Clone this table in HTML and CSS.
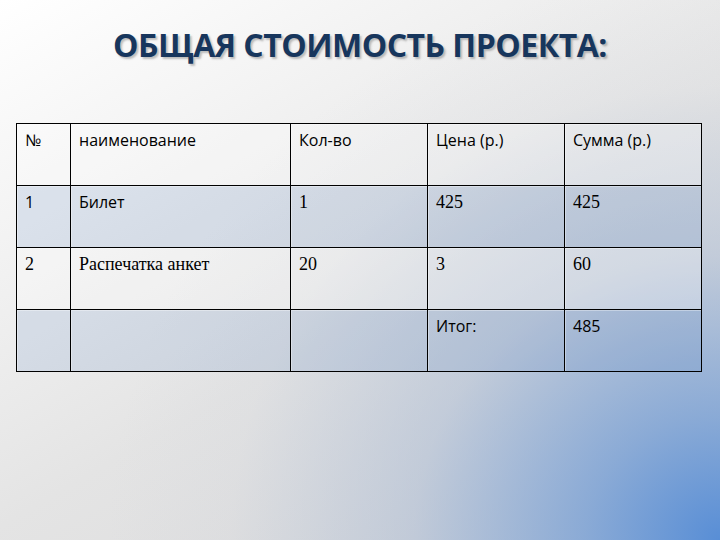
FILE: index.html
```html
<!DOCTYPE html>
<html lang="ru">
<head>
<meta charset="utf-8">
<title>Общая стоимость проекта</title>
<link rel="stylesheet" href="styles.css">
</head>
<body>
<div class="slide">
  <h1 class="title">ОБЩАЯ СТОИМОСТЬ ПРОЕКТА:</h1>
  <table class="cost">
    <colgroup>
      <col class="c-num">
      <col class="c-name">
      <col class="c-qty">
      <col class="c-price">
      <col class="c-sum">
    </colgroup>
    <tr class="row-head">
      <td class="sans">№</td>
      <td class="sans">наименование</td>
      <td class="sans">Кол-во</td>
      <td class="sans">Цена (р.)</td>
      <td class="sans">Сумма (р.)</td>
    </tr>
    <tr class="row-band">
      <td class="sans">1</td>
      <td class="sans">Билет</td>
      <td class="serif">1</td>
      <td class="serif">425</td>
      <td class="serif">425</td>
    </tr>
    <tr class="row-plain">
      <td class="serif">2</td>
      <td class="serif">Распечатка анкет</td>
      <td class="serif">20</td>
      <td class="serif">3</td>
      <td class="serif">60</td>
    </tr>
    <tr class="row-band">
      <td></td>
      <td></td>
      <td></td>
      <td class="sans">Итог:</td>
      <td class="sans">485</td>
    </tr>
  </table>
</div>
</body>
</html>
```
FILE: styles.css
```css
html, body {
  margin: 0;
  padding: 0;
}
.slide {
  width: 720px;
  height: 540px;
  overflow: hidden;
  box-sizing: border-box;
  padding-top: 25px;
  background:
    radial-gradient(ellipse 85% 105% at 100% 100%, rgba(88,142,214,1) 0%, rgba(118,158,212,0.8) 22%, rgba(165,183,210,0.5) 50%, rgba(200,205,215,0.15) 80%, rgba(215,215,220,0) 100%),
    linear-gradient(150deg, #ffffff 0%, #f3f3f3 25%, #e4e4e4 55%, #d8d8da 100%);
  font-family: "Open Sans", "Liberation Sans", sans-serif;
}
.title {
  margin: 0;
  text-align: center;
  font-family: "Open Sans", "Liberation Sans", sans-serif;
  font-weight: 700;
  font-size: 32px;
  letter-spacing: -0.5px;
  line-height: 40px;
  color: #17365d;
  text-shadow: 2px 2px 2px rgba(80, 80, 80, 0.35);
}
.cost {
  margin: 58px 0 0 16px;
  border-collapse: collapse;
  table-layout: fixed;
  width: 685px;
}
.c-num { width: 54px; }
.c-name { width: 220px; }
.c-qty { width: 137px; }
.c-price { width: 137px; }
.c-sum { width: 137px; }
.cost tr { height: 62px; }
.cost td {
  border: 1px solid #000;
  padding: 0 8px;
  vertical-align: top;
  box-shadow: inset 1px 1px 0 rgba(255,255,255,0.35);
}
.row-head td { background: rgba(255,255,255,0.25); }
.row-band td { background: rgba(90,130,190,0.16); }
.row-plain td { background: rgba(255,255,255,0.26); }
.sans {
  font-family: "Open Sans", "Liberation Sans", sans-serif;
  font-size: 16px;
  color: #000;
  padding-top: 5px !important;
}
.serif {
  font-family: "Liberation Serif", "Times New Roman", serif;
  font-size: 18px;
  color: #000;
  padding-top: 6px !important;
}
```
